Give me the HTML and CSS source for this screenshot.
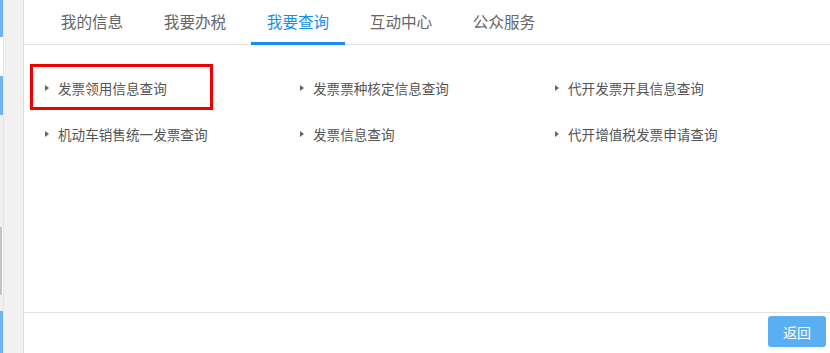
FILE: index.html
```html
<!DOCTYPE html>
<html lang="zh-CN">

<head>
    <meta charset="UTF-8">
    <meta name="viewport" content="width=device-width, initial-scale=1.0">
    <title>我要查询</title>
    <link rel="stylesheet" href="styles.css">
</head>

<body>
    <div class="page">
        <div class="side">
            <div class="side-strip">
                <div class="seg seg-blue seg-1"></div>
                <div class="seg seg-white seg-2"></div>
                <div class="seg seg-blue seg-3"></div>
                <div class="seg seg-gray seg-4"></div>
                <div class="seg seg-scroll seg-5"></div>
                <div class="seg seg-gray seg-6"></div>
                <div class="seg seg-blue seg-7"></div>
            </div>
            <div class="side-panel"></div>
        </div>

        <div class="main">
            <ul class="tabs">
                <li class="tab">我的信息</li>
                <li class="tab">我要办税</li>
                <li class="tab active">我要查询</li>
                <li class="tab">互动中心</li>
                <li class="tab">公众服务</li>
            </ul>

            <div class="content">
                <div class="items">
                    <a class="item marked"><span class="arrow"></span>发票领用信息查询</a>
                    <a class="item"><span class="arrow"></span>发票票种核定信息查询</a>
                    <a class="item"><span class="arrow"></span>代开发票开具信息查询</a>
                    <a class="item"><span class="arrow"></span>机动车销售统一发票查询</a>
                    <a class="item"><span class="arrow"></span>发票信息查询</a>
                    <a class="item"><span class="arrow"></span>代开增值税发票申请查询</a>
                </div>
            </div>

            <div class="footer">
                <button class="btn-back">返回</button>
            </div>
        </div>
    </div>
</body>

</html>
```

FILE: styles.css
```css
html,
body {
    margin: 0;
    padding: 0;
    height: 100%;
    background: #fff;
}

body {
    font-family: "Noto Sans CJK SC", "Noto Sans", sans-serif;
    color: #555;
}

.page {
    display: flex;
    height: 353px;
    overflow: hidden;
}

/* left edge of the parent window */
.side {
    display: flex;
    width: 24px;
    flex-shrink: 0;
}

.side-strip {
    display: flex;
    flex-direction: column;
    width: 3px;
    border-right: 1px solid #e6e6e6;
}

.seg-blue {
    background: #72b2f0;
}

.seg-white {
    background: #fff;
}

.seg-gray {
    background: #f0f0f0;
}

.seg-scroll {
    background: #c4c4c4;
    width: 2px;
}

.seg-1 { height: 37px; }
.seg-2 { height: 39px; }
.seg-3 { height: 39px; }
.seg-4 { height: 112px; }
.seg-5 { height: 68px; }
.seg-6 { height: 16px; }
.seg-7 { flex: 1; }

.side-panel {
    flex: 1;
    background: #f1f1f1;
    border-right: 1px solid #dcdcdc;
}

.main {
    flex: 1;
    display: flex;
    flex-direction: column;
    min-width: 0;
}

.tabs {
    display: flex;
    margin: 0;
    padding: 0 0 0 21px;
    list-style: none;
    height: 44px;
    border-bottom: 1px solid #e3e3e3;
}

.tab {
    width: 94px;
    margin-right: 9px;
    text-align: center;
    height: 42px;
    line-height: 43px;
    font-size: 15.6px;
    color: #666;
    border-bottom: 3px solid transparent;
    cursor: pointer;
}

.tab.active {
    color: #1a8ef0;
    border-bottom-color: #1a8ef0;
}

.content {
    flex: 1;
    padding: 19px 0 0 6px;
}

.items {
    display: grid;
    grid-template-columns: repeat(3, 255px);
    grid-auto-rows: 46px;
}

.item {
    display: flex;
    align-items: center;
    gap: 9px;
    box-sizing: border-box;
    width: 183px;
    height: 46px;
    padding: 1px 0 0 12px;
    border: 3px solid transparent;
    font-size: 13.6px;
    color: #555;
    white-space: nowrap;
    cursor: pointer;
}

.item.marked {
    border-color: #f20000;
}

.arrow {
    width: 0;
    height: 0;
    border-top: 3px solid transparent;
    border-bottom: 3px solid transparent;
    border-left: 4px solid #666;
}

.footer {
    display: flex;
    justify-content: flex-end;
    height: 41px;
    padding: 3px 4px 0 0;
    box-sizing: border-box;
    border-top: 1px solid #e3e3e3;
}

.btn-back {
    width: 58px;
    height: 31px;
    border: none;
    border-radius: 3px;
    background: #5aaef2;
    color: #fff;
    font-family: "Noto Sans CJK SC", sans-serif;
    font-size: 14px;
    cursor: pointer;
}
```
